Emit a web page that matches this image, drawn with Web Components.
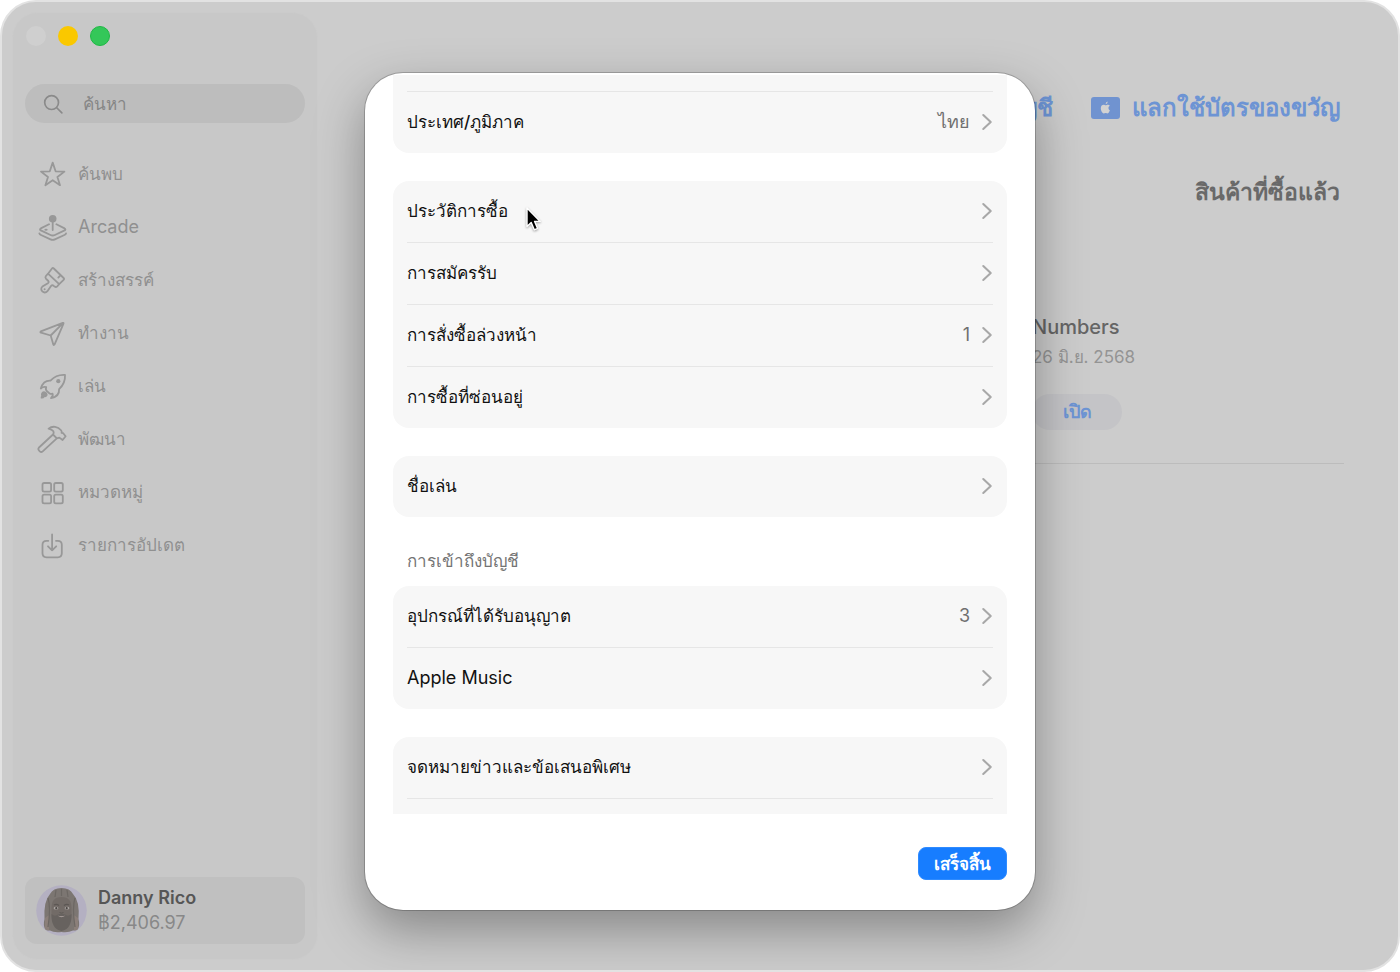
<!DOCTYPE html>
<html lang="th">
<head>
<meta charset="utf-8">
<meta name="viewport" content="width=device-width, initial-scale=1">
<title>App Store</title>
<style>
    html, body {
        margin: 0;
        height: 100%;
    }
    body {
        background: #fff;
        font-family: Inter, "Liberation Sans", sans-serif;
        --muted: #909090;
        --link: #6d94d4;
        --icon: #989898;
    }
</style>
</head>
<body>
<store-window>
    <store-sidebar slot="sidebar">
        <nav-item icon="star">ค้นพบ</nav-item>
        <nav-item icon="arcade" lang="en">Arcade</nav-item>
        <nav-item icon="brush">สร้างสรรค์</nav-item>
        <nav-item icon="plane">ทำงาน</nav-item>
        <nav-item icon="rocket">เล่น</nav-item>
        <nav-item icon="hammer">พัฒนา</nav-item>
        <nav-item icon="grid">หมวดหมู่</nav-item>
        <nav-item icon="download">รายการอัปเดต</nav-item>
        <user-card slot="user" balance="฿2,406.97">Danny Rico</user-card>
    </store-sidebar>
    <account-page>
        <purchase-item date="26 มิ.ย. 2568" action="เปิด">Numbers</purchase-item>
    </account-page>
    <account-dialog slot="dialog">
        <settings-group>
            <settings-row></settings-row>
            <settings-row value="ไทย">ประเทศ/ภูมิภาค</settings-row>
        </settings-group>
        <settings-group>
            <settings-row>ประวัติการซื้อ</settings-row>
            <settings-row>การสมัครรับ</settings-row>
            <settings-row value="1">การสั่งซื้อล่วงหน้า</settings-row>
            <settings-row>การซื้อที่ซ่อนอยู่</settings-row>
        </settings-group>
        <settings-group>
            <settings-row>ชื่อเล่น</settings-row>
        </settings-group>
        <settings-group heading="การเข้าถึงบัญชี">
            <settings-row value="3">อุปกรณ์ที่ได้รับอนุญาต</settings-row>
            <settings-row lang="en">Apple Music</settings-row>
        </settings-group>
        <settings-group>
            <settings-row>จดหมายข่าวและข้อเสนอพิเศษ</settings-row>
            <settings-row></settings-row>
        </settings-group>
    </account-dialog>
    <mouse-pointer slot="dialog"></mouse-pointer>
</store-window>

<script>
const ICONS = {
    star: '<path d="M15.7 3.6L18.6 12.3L27.4 12.6L20.4 18L23 26.2L15.7 21.2L8.4 26.2L11 18L4 12.6L12.8 12.3Z"/>',
    arcade: '<circle cx="15.7" cy="6.7" r="3.8" fill="currentColor" stroke="none"/><path d="M15.7 8V18M12 12.3L3.8 16.4q-1.6 1 0 2L13.5 23q2.2 1 4.4 0L27.6 18.4q1.6-1 0-2L19.4 12.3M2.4 21.4q.3 1 1.6 1.6L13.5 27.4q2.2 1 4.4 0L27.4 23q1.3-.6 1.6-1.6"/><ellipse cx="9" cy="17.7" rx="1.7" ry="1" fill="currentColor" stroke="none"/>',
    brush: '<path d="M11 8.7L15 3.5q.8-1 1.8 0L26.6 13q1 1 0 1.9L22.2 19.2M23.5 10.2L21.3 12.6M11 8.7L8.9 11q-1 1.3 0 2.6l2.4 2.4q1 1.2-.4 2.2L5.400 21.600c-3.500 3 1.800 8.400 5 4.600L14 21q1-1.400 2.400-.4l1.200 1q1.400 1 2.600-.2L22.200 19.200ZM11 8.700L22.200 19.200"/><circle cx="7.600" cy="24.200" r="1" fill="currentColor" stroke="none"/>',
    plane: '<path d="M3.8 13.4L25.8 4.9q1-.3.7.7L17.6 26.4q-.8 1.3-1.3 0L13.7 17.5L4 14.7q-1.2-.6-.2-1.3ZM13.7 17.5L26 5.2"/>',
    rocket: '<path d="M28 4C21 3.5 17 6 13.5 9.7C9 9.4 5.5 12 3.8 17.5Q6.5 15.2 9.2 16.2Q8.2 18.5 10 20.3L12.3 22.2Q14 23.4 15.5 22.6Q16.5 24.6 14 27.2C19.5 26 22.4 22.5 22.1 18.2C26 14.5 28.4 10 28 4Z"/><circle cx="21.3" cy="10.2" r="2.1" fill="currentColor" stroke="none"/><path d="M5 21q2-1.6 4.3.3q2.4 2.3.4 4.2q-1 1-2.4.7q-.5 1.6-3.5 1.2q-.4-1.5.4-2.4q-1-1.8.8-4Z" fill="currentColor" stroke="none"/>',
    hammer: '<path d="M16 10.500L2 23.500q-1.300 1.500 0 3l.8.9q1.400 1.300 2.900 0L19.800 14.300M11.600 4.600C15.500 1.500 21 2.500 24 6.200q1 1.200.6 2.600l1.600.4L28.600 12.200L25.600 16L22.400 13.600L19.800 14.300L16 10.500Q18.500 6.500 11.600 4.600Z"/>',
    grid: '<rect x="5.5" y="6" width="8.6" height="8.6" rx="1.6"/><rect x="17.2" y="6" width="8.6" height="8.6" rx="1.6"/><rect x="5.5" y="17.7" width="8.6" height="8.6" rx="1.6"/><rect x="17.2" y="17.7" width="8.6" height="8.6" rx="1.6"/>',
    download: '<path d="M11.3 10.8H9.500q-4 0-4 4v8.500q0 4 4 4h11.300q4 0 4-4V14.800q0-4-4-4H19M15.100 4.500V20.300M11 16.300l4.100 4.100l4.100-4.100"/>',
    search: '<circle cx="13.5" cy="13.5" r="7.4"/><path d="M19 19L24.5 24.500"/>',
    chevron: '<path d="M11 7.500L19 15L11 22.500"/>'
};

// Small base class, every element renders once into its own shadow root
class StoreElement extends HTMLElement {
    connectedCallback() {
        this.attachShadow({mode: 'open'});
        this.render();
    }
}

class StoreIcon extends StoreElement {
    render() {
        this.shadowRoot.innerHTML = `
        <style>
        :host {
            display: block;
            flex: none;
            width: 30px;
            height: 30px;
        }
        svg {
            display: block;
            width: 100%;
            height: 100%;
            fill: none;
            stroke: currentColor;
            stroke-width: var(--stroke, 1.8);
            stroke-linecap: round;
            stroke-linejoin: round;
        }
        </style>
        <svg viewBox="0 0 30 30" aria-hidden="true">${ICONS[this.getAttribute('name')]}</svg>
        `;
    }
}

class StoreWindow extends StoreElement {
    render() {
        this.shadowRoot.innerHTML = `
        <style>
        :host {
            display: flex;
            position: relative;
            box-sizing: border-box;
            min-height: 100vh;
            overflow: hidden;
            border: 2px solid #e2e2e2;
            border-radius: 36px;
            background: #ccc;
        }
        main {
            flex: 1;
            min-width: 0;
        }
        .overlay {
            position: absolute;
            inset: 0;
            display: grid;
            place-items: start center;
            padding-top: 71px;
        }
        </style>
        <slot name="sidebar"></slot>
        <main><slot></slot></main>
        <div class="overlay"><slot name="dialog"></slot></div>
        `;
    }
}

class StoreSidebar extends StoreElement {
    render() {
        this.shadowRoot.innerHTML = `
        <style>
        :host {
            display: flex;
            flex-direction: column;
            flex: none;
            box-sizing: border-box;
            width: 306px;
            margin: 10px;
            padding: 12px;
            border: 1px solid #cbcbcb;
            border-radius: 26px;
            background: #c8c8c8;
        }
        .lights {
            display: flex;
            gap: 12px;
            padding: 1px 1px 2px;
        }
        .lights button {
            width: 20px;
            height: 20px;
            padding: 0;
            border: 0;
            border-radius: 50%;
            background: #cfcfcf;
        }
        .lights .min {
            background: #fac800;
        }
        .lights .max {
            background: #34c759;
            border: 1px solid #1fb845;
        }
        .search {
            display: flex;
            align-items: center;
            gap: 16px;
            height: 39px;
            margin-top: 36px;
            padding: 0 14px;
            border-radius: 20px;
            background: #bdbdbd;
            color: #8a8a8a;
        }
        .search store-icon {
            width: 28px;
            height: 28px;
        }
        input {
            flex: 1;
            min-width: 0;
            padding: 0;
            border: 0;
            outline: 0;
            background: none;
            font: 500 17px/28px Inter, sans-serif;
            color: inherit;
        }
        input::placeholder {
            color: #868686;
            opacity: 1;
        }
        nav {
            display: flex;
            flex-direction: column;
            flex: 1;
            margin-top: 24px;
        }
        </style>
        <div class="lights">
            <button type="button" aria-label="ปิด"></button>
            <button type="button" class="min" aria-label="ย่อ"></button>
            <button type="button" class="max" aria-label="ขยาย"></button>
        </div>
        <label class="search">
            <store-icon name="search"></store-icon>
            <input type="text" placeholder="ค้นหา" aria-label="ค้นหา">
        </label>
        <nav><slot></slot></nav>
        <slot name="user"></slot>
        `;
    }
}

class NavItem extends StoreElement {
    render() {
        this.shadowRoot.innerHTML = `
        <style>
        :host {
            display: block;
        }
        a {
            display: flex;
            align-items: center;
            gap: 11px;
            height: 53px;
            padding-left: 12px;
            font-size: 17px;
            font-weight: 500;
            line-height: 28px;
            text-decoration: none;
            color: var(--muted);
        }
        :host([lang="en"]) a {
            font-size: 18px;
            font-weight: 400;
        }
        store-icon {
            color: var(--icon);
        }
        </style>
        <a href="#"><store-icon name="${this.getAttribute('icon')}"></store-icon><span><slot></slot></span></a>
        `;
    }
}

class UserCard extends StoreElement {
    render() {
        this.shadowRoot.innerHTML = `
        <style>
        :host {
            display: block;
        }
        a {
            display: flex;
            align-items: center;
            gap: 11px;
            height: 67px;
            padding-left: 11px;
            margin-bottom: 3px;
            border-radius: 12px;
            background: #c0c0c0;
            text-decoration: none;
            font-size: 18px;
            line-height: 25px;
            color: #888;
        }
        svg {
            flex: none;
            width: 51px;
            height: 51px;
        }
        span {
            padding-bottom: 2px;
        }
        strong {
            display: block;
            font-weight: 600;
            color: #565656;
        }
        </style>
        <a href="#">
            <svg viewBox="0 0 51 51" aria-hidden="true">
                <circle cx="25.5" cy="25.5" r="25.3" fill="#b4b0c2"/>
                <path d="M9 44Q7 40 8.5 34Q7.5 16 14 9Q17 3 25.500 3T37 9Q44 16 42.500 34Q44 40 42 44Q40 46 37 45.500Q32 48 25.500 47Q18 48 14 45.500Q11 46 9 44Z" fill="#7c7672"/>
                <path d="M9 33v11q2 2 4 1V30ZM42 33v11q-2 2-4 1V30Z" fill="#8b7f79"/>
                <path d="M12 13Q15 22 12 42M39 13Q36 22 39 42M20 5L19 12M25.500 4V11M31 5L32 12" fill="none" stroke="#6c6763" stroke-width="1.2"/>
                <path d="M25.500 12Q15.500 12 15.500 23V30Q16 41 25.500 41.500Q35 41 35.500 30V23Q35.500 12 25.500 12Z" fill="#726b67"/>
                <path d="M15.500 29Q19 32 22 29.500Q25.500 28 29 29.500Q32 32 35.500 29Q36 44 25.500 46Q15 44 15.500 29Z" fill="#67625f"/>
                <path d="M18 20Q20.500 18.500 23 20.500M28 20.500Q30.500 18.500 33 20" fill="none" stroke="#5c5754" stroke-width="1.2"/>
                <ellipse cx="20" cy="23.200" rx="2.400" ry="1.400" fill="#aaa5a2"/>
                <ellipse cx="31" cy="23.200" rx="2.400" ry="1.400" fill="#aaa5a2"/>
                <circle cx="20.300" cy="23.200" r="1.100" fill="#4c4845"/>
                <circle cx="30.700" cy="23.200" r="1.100" fill="#4c4845"/>
                <path d="M23.500 27.500q2 1.200 4 0" fill="none" stroke="#5f5a57"/>
                <path d="M21.500 30.500Q25.500 31.500 29.500 30.500Q25.500 34 21.500 30.500Z" fill="#a09692"/>
            </svg>
            <span><strong><slot></slot></strong>${this.getAttribute('balance')}</span>
        </a>
        `;
    }
}

class AccountPage extends StoreElement {
    render() {
        this.shadowRoot.innerHTML = `
        <style>
        :host {
            display: flex;
            flex-direction: column;
            padding: 86px 58px 0 0;
        }
        .links {
            display: flex;
            justify-content: flex-end;
            gap: 38px;
        }
        .links a {
            display: flex;
            align-items: center;
            gap: 12px;
            font-size: 24px;
            font-weight: 600;
            line-height: 40px;
            white-space: nowrap;
            text-decoration: none;
            color: var(--link);
        }
        .links svg {
            width: 29px;
            height: 22px;
        }
        h1 {
            margin: 44px 0 0;
            font-size: 23px;
            font-weight: 600;
            line-height: 40px;
            text-align: right;
            color: #696969;
        }
        .items {
            display: flex;
            justify-content: flex-end;
            margin: 100px -4px 0 0;
        }
        </style>
        <div class="links">
            <a href="#">บัญชี</a>
            <a href="#">
                <svg viewBox="0 0 29 22" aria-hidden="true">
                    <rect width="29" height="22" rx="3" fill="#7093d0"/>
                    <path d="M18.900 13.400Q17.600 16.400 16.300 16.400C15.500 16.400 15.300 16 14.500 16S13.400 16.400 12.700 16.400C11.400 16.400 9.800 13.600 9.800 11.300C9.800 8.900 11.200 7.800 12.600 7.800C13.500 7.800 14 8.300 14.700 8.300C15.300 8.300 15.900 7.700 17 7.700Q18.200 7.800 18.800 8.800Q17.400 9.600 17.400 11Q17.500 12.700 18.900 13.400ZM14.600 7.300Q14.500 5.200 16.700 4.500Q16.900 6.700 14.600 7.300Z" fill="#d2d2d2"/>
                </svg>
                <span>แลกใช้บัตรของขวัญ</span>
            </a>
        </div>
        <h1>สินค้าที่ซื้อแล้ว</h1>
        <div class="items"><slot></slot></div>
        `;
    }
}

class PurchaseItem extends StoreElement {
    render() {
        this.shadowRoot.innerHTML = `
        <style>
        :host {
            display: block;
            box-sizing: border-box;
            width: 312px;
            padding-bottom: 33px;
            border-bottom: 1px solid #bcbcbc;
        }
        h2, p {
            margin: 0;
            line-height: 30px;
        }
        h2 {
            font-size: 20px;
            font-weight: 500;
            color: #656565;
        }
        p {
            font-size: 17px;
            color: #949494;
        }
        button {
            width: 90px;
            height: 36px;
            margin-top: 22px;
            padding: 0;
            border: 0;
            border-radius: 18px;
            background: #c4c4c7;
            font: 600 18px/28px Inter, sans-serif;
            color: var(--link);
        }
        </style>
        <h2><slot></slot></h2>
        <p>${this.getAttribute('date')}</p>
        <button type="button">${this.getAttribute('action')}</button>
        `;
    }
}

class AccountDialog extends StoreElement {
    render() {
        this.shadowRoot.innerHTML = `
        <style>
        :host {
            display: flex;
            flex-direction: column;
            box-sizing: border-box;
            width: 670px;
            max-width: 100%;
            padding-top: 2px;
            border-radius: 38px;
            background: #fff;
            box-shadow: 0 0 0 1px rgba(0, 0, 0, .2), 0 20px 50px rgba(0, 0, 0, .34);
        }
        .list {
            display: flex;
            flex-direction: column;
            justify-content: center;
            gap: 28px;
            height: 739px;
            margin: 0 28px;
            overflow: hidden;
        }
        footer {
            display: flex;
            justify-content: flex-end;
            padding: 33px 28px 30px;
        }
        footer button {
            height: 33px;
            padding: 0 15px;
            border: 1px solid #2f8bff;
            border-radius: 8px;
            background: #177dff;
            font: 600 17px/28px Inter, sans-serif;
            color: #fff;
        }
        </style>
        <div class="list"><slot></slot></div>
        <footer><button type="button">เสร็จสิ้น</button></footer>
        `;
    }
}

class SettingsGroup extends StoreElement {
    render() {
        const heading = this.getAttribute('heading');
        this.shadowRoot.innerHTML = `
        <style>
        :host {
            display: block;
            flex: none;
        }
        h3 {
            margin: 1px 14px 10px;
            font-size: 17px;
            font-weight: 500;
            line-height: 30px;
            color: #747474;
        }
        .rows {
            overflow: hidden;
            border-radius: 16px;
            background: #f7f7f7;
        }
        ::slotted(:not(:first-child)) {
            border-top: 1px solid #e6e6e6;
        }
        </style>
        ${heading ? `<h3>${heading}</h3>` : ''}
        <div class="rows"><slot></slot></div>
        `;
    }
}

class SettingsRow extends StoreElement {
    render() {
        this.shadowRoot.innerHTML = `
        <style>
        :host {
            display: block;
            margin: 0 14px;
        }
        button {
            display: flex;
            align-items: center;
            width: 100%;
            height: 61px;
            padding: 0;
            border: 0;
            background: none;
            font: 500 17px/28px Inter, sans-serif;
            text-align: left;
            color: #111;
        }
        :host([lang="en"]) button {
            font-size: 18px;
            font-weight: 400;
        }
        .label {
            flex: 1;
        }
        .value {
            font-size: 18px;
            font-weight: 400;
            color: #707070;
        }
        store-icon {
            --stroke: 2.2;
            width: 28px;
            height: 28px;
            margin: 0 -8px 0 3px;
            color: #a8a8a8;
        }
        </style>
        <button type="button">
            <span class="label"><slot></slot></span>
            <span class="value">${this.getAttribute('value') || ''}</span>
            <store-icon name="chevron"></store-icon>
        </button>
        `;
    }
}

class MousePointer extends StoreElement {
    render() {
        this.shadowRoot.innerHTML = `
        <style>
        :host {
            position: absolute;
            left: 523px;
            top: 204px;
            width: 18px;
            height: 28px;
            pointer-events: none;
            filter: drop-shadow(0 1px 1px rgba(0, 0, 0, .35));
        }
        svg {
            display: block;
        }
        </style>
        <svg width="18" height="28" viewBox="0 0 18 28" aria-hidden="true">
            <path d="M2 2V20.500L6.200 16.600L9.300 23.800L12.600 22.400L9.600 15.400H15.200Z" fill="#000" stroke="#fff" stroke-width="1.400" stroke-linejoin="round"/>
        </svg>
        `;
    }
}

customElements.define('store-icon', StoreIcon);
customElements.define('store-window', StoreWindow);
customElements.define('store-sidebar', StoreSidebar);
customElements.define('nav-item', NavItem);
customElements.define('user-card', UserCard);
customElements.define('account-page', AccountPage);
customElements.define('purchase-item', PurchaseItem);
customElements.define('account-dialog', AccountDialog);
customElements.define('settings-group', SettingsGroup);
customElements.define('settings-row', SettingsRow);
customElements.define('mouse-pointer', MousePointer);
</script>
</body>
</html>
